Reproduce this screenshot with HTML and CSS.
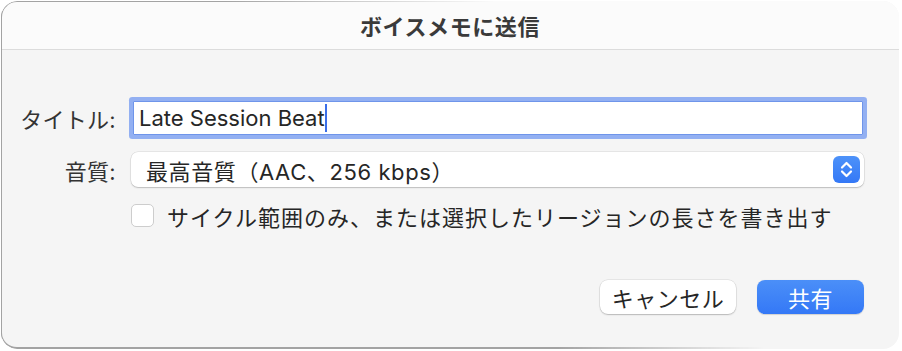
FILE: index.html
```html
<!DOCTYPE html>
<html>
    <head>
        <meta charset="UTF-8">
        <link rel="stylesheet" href="styles.css">
    </head>
    <body>
        <div class="window">
            <!-- タイトルバー -->
            <div class="titlebar">ボイスメモに送信</div>

            <div class="content">
                <div class="form">
                    <div class="label">タイトル:</div>
                    <div class="textfield">
                        <span class="value">Late Session Beat</span><span class="caret"></span>
                    </div>

                    <div class="label">音質:</div>
                    <div class="popup">
                        <span class="value">最高音質（AAC、256 kbps）</span>
                        <span class="stepper">
                            <svg width="27" height="27" viewBox="0 0 27 27">
                                <path d="M9 11.5 L13.5 7 L18 11.5" fill="none" stroke="#fff" stroke-width="2.2" stroke-linecap="round" stroke-linejoin="round"/>
                                <path d="M9 15.5 L13.5 20 L18 15.5" fill="none" stroke="#fff" stroke-width="2.2" stroke-linecap="round" stroke-linejoin="round"/>
                            </svg>
                        </span>
                    </div>

                    <div></div>
                    <label class="check">
                        <span class="box"></span>
                        <span>サイクル範囲のみ、または選択したリージョンの長さを書き出す</span>
                    </label>
                </div>

                <!-- ボタン -->
                <div class="buttons">
                    <button class="btn">キャンセル</button>
                    <button class="btn primary">共有</button>
                </div>
            </div>
        </div>
    </body>
</html>
```

FILE: styles.css
```css
body {
    margin: 0;
    background: #ffffff;
    font-family: "Inter", "Noto Sans CJK JP", sans-serif;
    font-size: 22px;
    color: #262626;
}

.window {
    position: relative;
    margin: 1px 0 0 1px;
    width: 898px;
    height: 348px;
    border-radius: 16px;
    background: #f5f5f5;
    overflow: hidden;
}

/* 枠線（右へフェード） */
.window::before,
.window::after {
    content: "";
    position: absolute;
    top: 0;
    left: 0;
    right: 0;
    bottom: 0;
    pointer-events: none;
    border-left: 1.5px solid #a3a3a3;
}

.window::before {
    border-top: 1.5px solid #a3a3a3;
    border-top-left-radius: 16px;
    -webkit-mask-image: linear-gradient(to right, #000 0, #000 25%, transparent 55%);
}

.window::after {
    border-bottom: 2px solid #a3a3a3;
    border-bottom-left-radius: 16px;
    -webkit-mask-image: linear-gradient(to right, #000 0, #000 62%, transparent 85%);
}

.titlebar {
    height: 48px;
    display: flex;
    align-items: center;
    justify-content: center;
    background: #fbfbfb;
    border-bottom: 1px solid #dcdcdc;
    font-weight: bold;
    font-size: 22px;
    color: #3a3a3a;
    letter-spacing: 0.6px;
}

.content {
    padding: 51px 35px 0 0;
}

.form {
    display: grid;
    grid-template-columns: 115px 1fr;
    column-gap: 15px;
    row-gap: 17px;
    align-items: center;
}

.label {
    text-align: right;
    color: #333333;
    letter-spacing: 0.3px;
}

.textfield {
    height: 34px;
    margin: 0 1px 0 2px;
    display: flex;
    align-items: center;
    padding-left: 5px;
    background: #ffffff;
    border: 1px solid #6f95ea;
    border-radius: 1px;
    box-shadow: 0 0 0 4px #93b0f2;
    box-sizing: border-box;
}

.caret {
    display: inline-block;
    width: 2px;
    height: 28px;
    background: #3a6ee8;
}

.popup {
    height: 35px;
    display: flex;
    align-items: center;
    justify-content: space-between;
    padding: 0 4px 0 15px;
    background: #ffffff;
    border-radius: 7px;
    box-shadow: 0 0 0 0.5px rgba(0, 0, 0, 0.12), 0 1px 1.5px rgba(0, 0, 0, 0.18);
    box-sizing: border-box;
}

.popup .value {
    letter-spacing: 0.6px;
}

.stepper {
    width: 27px;
    height: 27px;
    border-radius: 6px;
    background: linear-gradient(to bottom, #4d92f9, #3478f6);
    display: flex;
}

.check {
    display: flex;
    align-items: center;
    gap: 13px;
    height: 23px;
    letter-spacing: 1px;
}

.box {
    width: 21px;
    height: 21px;
    background: #ffffff;
    border: 1px solid #cdcdcd;
    border-radius: 5px;
    flex-shrink: 0;
}

.buttons {
    display: flex;
    justify-content: flex-end;
    gap: 21px;
    margin-top: 53px;
}

.btn {
    height: 34px;
    width: 136px;
    font-family: inherit;
    font-size: 22px;
    color: #262626;
    background: #ffffff;
    border: none;
    border-radius: 8px;
    box-shadow: 0 0 0 0.5px rgba(0, 0, 0, 0.12), 0 1px 1.5px rgba(0, 0, 0, 0.2);
    padding: 0;
    letter-spacing: 0.5px;
}

.btn.primary {
    width: 107px;
    color: #ffffff;
    background: linear-gradient(to bottom, #4b8ff8, #3478f6);
    box-shadow: 0 0.5px 1px rgba(0, 0, 0, 0.15);
}
```
